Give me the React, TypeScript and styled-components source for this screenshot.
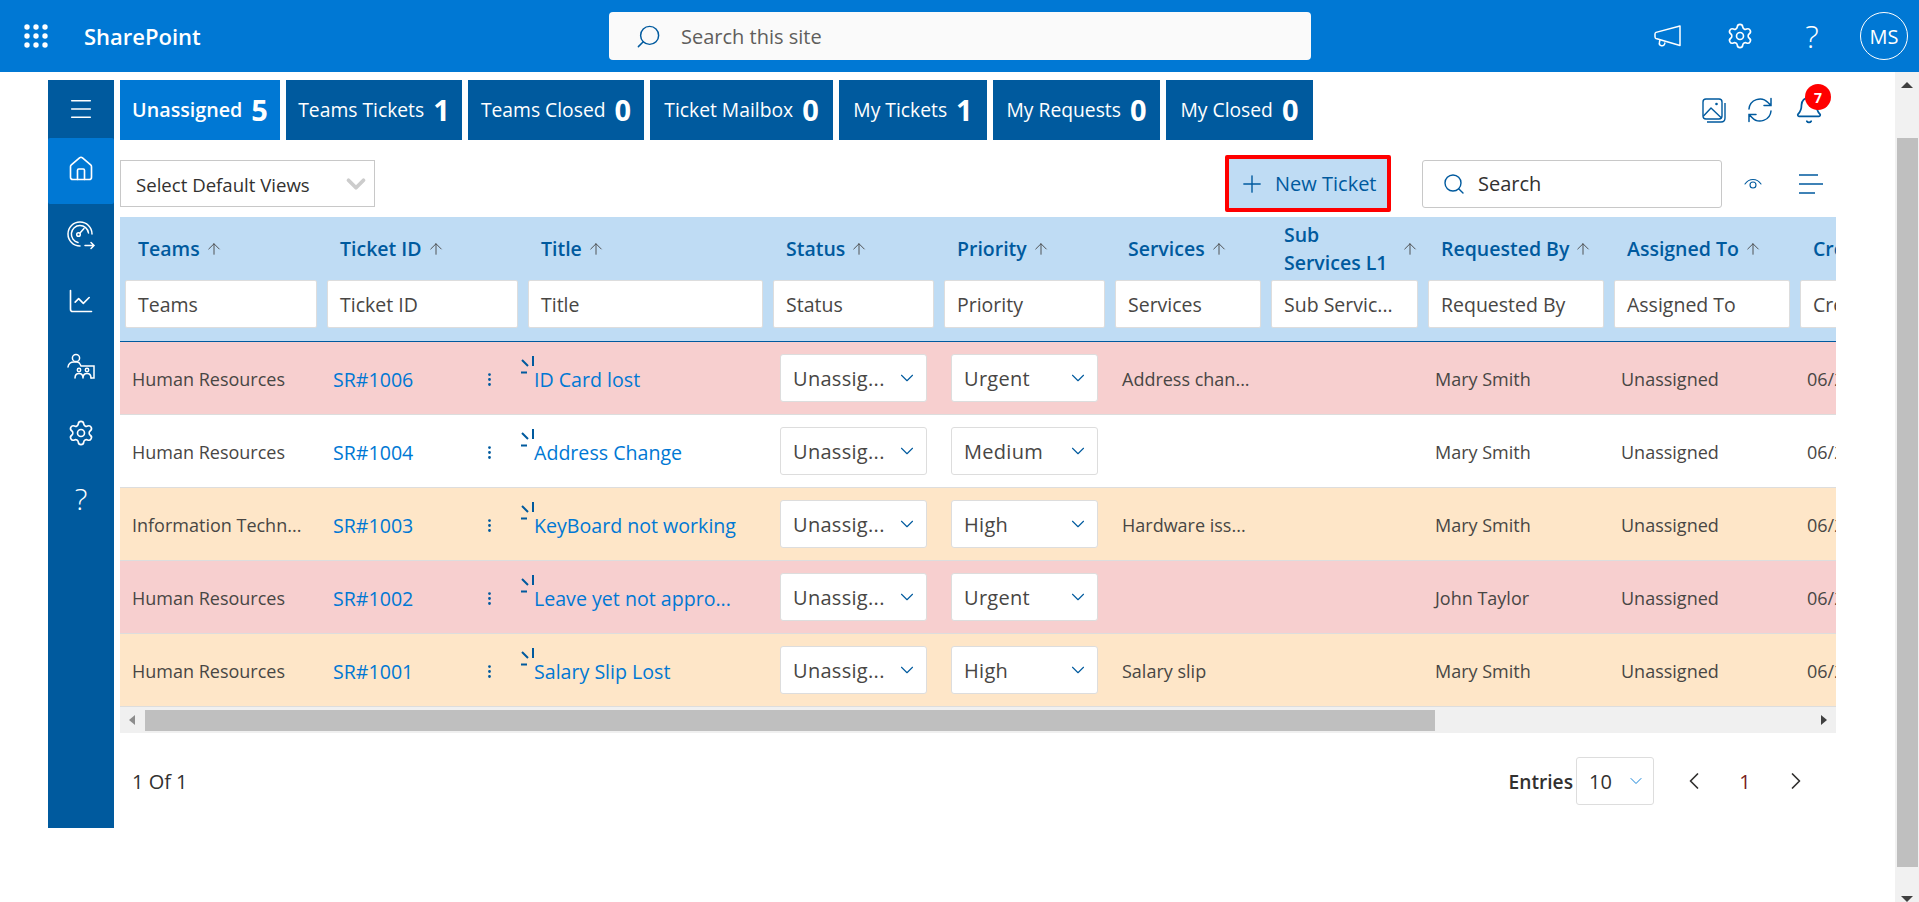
import React from 'react'
import styled, { createGlobalStyle } from 'styled-components'
import { ArrowUp, Bell, ChartLine, ChevronDown, ChevronLeft, ChevronRight, EllipsisVertical, House, Menu, Plus, Search, Settings } from 'lucide-react'

const COLUMNS = '202px 201px 245px 171px 171px 156px 157px 186px 186px 180px'
const FONT = '"Open Sans", "Noto Sans", sans-serif'

const tabs = [
  { label: 'Unassigned', count: 5, width: 160, active: true },
  { label: 'Teams Tickets', count: 1, width: 176 },
  { label: 'Teams Closed', count: 0, width: 176 },
  { label: 'Ticket Mailbox', count: 0, width: 183 },
  { label: 'My Tickets', count: 1, width: 148 },
  { label: 'My Requests', count: 0, width: 167 },
  { label: 'My Closed', count: 0, width: 147 },
]

const headers = ['Teams', 'Ticket ID', 'Title', 'Status', 'Priority', 'Services', 'Sub Services L1', 'Requested By', 'Assigned To', 'Created']
const filters = ['Teams', 'Ticket ID', 'Title', 'Status', 'Priority', 'Services', 'Sub Servic...', 'Requested By', 'Assigned To', 'Created']

const rows = [
  { team: 'Human Resources', id: 'SR#1006', title: 'ID Card lost', priority: 'Urgent', service: 'Address chan...', by: 'Mary Smith', tone: 'pink' },
  { team: 'Human Resources', id: 'SR#1004', title: 'Address Change', priority: 'Medium', service: '', by: 'Mary Smith', tone: 'white' },
  { team: 'Information Techn...', id: 'SR#1003', title: 'KeyBoard not working', priority: 'High', service: 'Hardware iss...', by: 'Mary Smith', tone: 'orange' },
  { team: 'Human Resources', id: 'SR#1002', title: 'Leave yet not appro...', priority: 'Urgent', service: '', by: 'John Taylor', tone: 'pink' },
  { team: 'Human Resources', id: 'SR#1001', title: 'Salary Slip Lost', priority: 'High', service: 'Salary slip', by: 'Mary Smith', tone: 'orange' },
]

const toneColors: Record<string, string> = { pink: '#f7cfcf', white: '#ffffff', orange: '#fee6c8' }

const GaugeIcon = () => (
  <svg width="30" height="30" viewBox="0 0 30 30" fill="none" stroke="currentColor" strokeWidth="1.5" strokeLinecap="round">
    <path d="M14 26A12 12 0 1 1 26 14" />
    <path d="M12 22.500A8.600 8.600 0 1 1 22.500 13" />
    <circle cx="12.500" cy="14.500" r="1.800" />
    <path d="M14 13l4-4.500M19 25.500h9M25 22.500l3 3-3 3" />
  </svg>
)

const PeopleIcon = () => (
  <svg width="30" height="30" viewBox="0 0 30 30" fill="none" stroke="currentColor" strokeWidth="1.5" strokeLinecap="round">
    <circle cx="10" cy="6" r="3.600" />
    <path d="M2 15c.4-3 2.600-5 6-5h3c1.600 0 2.500.8 3 2l1 2h13v12h-3" />
    <circle cx="13" cy="18" r="1.700" />
    <circle cx="21" cy="18" r="1.700" />
    <path d="M9 26c0-3 1.500-4.600 4-4.600s4 1.600 4 4.600M17 26c0-3 1.500-4.600 4-4.600s4 1.600 4 4.600" />
  </svg>
)

const MegaphoneIcon = () => (
  <svg width="28" height="26" viewBox="0 0 28 26" fill="none" stroke="currentColor" strokeWidth="1.5" strokeLinejoin="round">
    <path d="M26 3v19.500L2 15.500c-.8-.3-1-1-1-1.800V11c0-.8.3-1.300 1-1.600z" />
    <path d="M6 17l-.6 2.500c-.4 1.500.4 2.800 1.900 3.200 1.500.4 2.800-.3 3.300-1.800l.4-1.400" />
  </svg>
)

const PhotoStackIcon = () => (
  <svg width="24" height="25" viewBox="0 0 24 25" fill="none" stroke="currentColor" strokeWidth="1.4" strokeLinejoin="round">
    <rect x="1" y="1" width="19" height="20" rx="3" />
    <path d="M23 5v15c0 2.200-1.600 4-4 4H5" />
    <path d="M1.500 18l7.500-8 10.500 10" />
    <circle cx="14.500" cy="6" r="1.300" fill="currentColor" stroke="none" />
  </svg>
)

const RefreshIcon = () => (
  <svg width="26" height="26" viewBox="0 0 26 26" fill="none" stroke="currentColor" strokeWidth="1.5" strokeLinecap="round">
    <path d="M2 12A11 11 0 0 1 21 5.500l3 3M24 1.500v7h-7" />
    <path d="M24 14A11 11 0 0 1 5 20.500l-3-3M2 24.500v-7h7" />
  </svg>
)

const EyeIcon = () => (
  <svg width="18" height="14" viewBox="0 0 18 14" fill="none" stroke="currentColor" strokeWidth="1.1" strokeLinecap="round">
    <path d="M1 7c2-3 5-4.500 8-4.500S15 4 17 7" />
    <circle cx="9" cy="8" r="3" />
  </svg>
)

const LinesIcon = () => (
  <svg width="25" height="22" viewBox="0 0 25 22" fill="none" stroke="currentColor" strokeWidth="1.600">
    <path d="M1 2h19M1 11h24M1 20h16" />
  </svg>
)

const SpinnerIcon = () => (
  <svg width="14" height="18" viewBox="0 0 14 18" fill="none" stroke="#005a9e" strokeWidth="2">
    <path d="M12 0v10M1 4l6 6M0 16.500h6" />
  </svg>
)

const WaffleIcon = () => (
  <svg width="24" height="24" viewBox="0 0 24 24" fill="currentColor">
    {[3, 12, 21].flatMap((y) => [3, 12, 21].map((x) => <circle key={`${x}-${y}`} cx={x} cy={y} r="2.700" />))}
  </svg>
)

const App = () => (
  <Page>
    <GlobalStyle />
    <TopBar>
      <Waffle><WaffleIcon /></Waffle>
      <Brand>SharePoint</Brand>
      <SiteSearch>
        <Search size={27} strokeWidth={1.3} color="#005a9e" style={{ transform: 'scaleX(-1)' }} />
        <span>Search this site</span>
      </SiteSearch>
      <TopActions>
        <TopAction><MegaphoneIcon /></TopAction>
        <TopAction><Settings size={28} strokeWidth={1.4} /></TopAction>
        <TopAction><HelpMark>?</HelpMark></TopAction>
        <Avatar>MS</Avatar>
      </TopActions>
    </TopBar>
    <Body>
      <Main>
        <Sidebar>
          <SideToggle><Menu size={28} strokeWidth={1.3} /></SideToggle>
          <SideItem $active><House size={28} strokeWidth={1.4} /></SideItem>
          <SideItem><GaugeIcon /></SideItem>
          <SideItem><ChartLine size={28} strokeWidth={1.4} /></SideItem>
          <SideItem><PeopleIcon /></SideItem>
          <SideItem><Settings size={28} strokeWidth={1.4} /></SideItem>
          <SideItem><SideHelp>?</SideHelp></SideItem>
        </Sidebar>
        <Content>
          <TabRow>
            {tabs.map((t) => (
              <Tab key={t.label} $active={t.active} $width={t.width}>
                {t.label}
                <TabCount>{t.count}</TabCount>
              </Tab>
            ))}
            <TabTools>
              <PhotoStackIcon />
              <RefreshIcon />
              <BellWrap>
                <Bell size={30} strokeWidth={1.4} />
                <Badge>7</Badge>
              </BellWrap>
            </TabTools>
          </TabRow>
          <Toolbar>
            <ViewSelect>
              Select Default Views
              <ChevronDown size={30} strokeWidth={3} color="#cccccc" />
            </ViewSelect>
            <NewTicket>
              <Plus size={28} strokeWidth={1.2} />
              New Ticket
            </NewTicket>
            <SearchBox>
              <Search size={24} strokeWidth={1.4} color="#005a9e" />
              <span>Search</span>
            </SearchBox>
            <ToolIcon $margin={22}><EyeIcon /></ToolIcon>
            <ToolIcon $margin={36}><LinesIcon /></ToolIcon>
          </Toolbar>
          <Table>
            <HeadRow>
              {headers.map((h, i) => (
                <HeadCell key={h}>
                  <HeadLabel $wrap={i === 6}>{h}</HeadLabel>
                  <ArrowUp size={18} strokeWidth={1.200} color="#444" />
                </HeadCell>
              ))}
            </HeadRow>
            <FilterRow>
              {filters.map((f, i) => (
                <FilterCell key={i}><FilterInput>{f}</FilterInput></FilterCell>
              ))}
            </FilterRow>
            {rows.map((r) => (
              <Row key={r.id} $tone={r.tone}>
                <Cell>{r.team}</Cell>
                <IdCell>
                  <CellLink>{r.id}</CellLink>
                  <EllipsisVertical size={17} strokeWidth={2} color="#005a9e" />
                </IdCell>
                <TitleCell>
                  <Spinner><SpinnerIcon /></Spinner>
                  <CellLink>{r.title}</CellLink>
                </TitleCell>
                <Cell><RowSelect>Unassig...<ChevronDown size={22} strokeWidth={1.200} color="#005a9e" /></RowSelect></Cell>
                <Cell><RowSelect>{r.priority}<ChevronDown size={22} strokeWidth={1.200} color="#005a9e" /></RowSelect></Cell>
                <Cell>{r.service}</Cell>
                <Cell />
                <Cell>{r.by}</Cell>
                <Cell>Unassigned</Cell>
                <Cell>06/20/2024</Cell>
              </Row>
            ))}
          </Table>
          <HScroll>
            <ScrollArrow $dir="left" />
            <HThumb />
            <ScrollArrow $dir="right" />
          </HScroll>
          <Footer>
            <span>1 Of 1</span>
            <Pager>
              <EntriesLabel>Entries</EntriesLabel>
              <EntriesSelect>10<ChevronDown size={20} strokeWidth={1.100} color="#0078d4" /></EntriesSelect>
              <PageNav $margin={26}><ChevronLeft size={28} strokeWidth={1.500} /></PageNav>
              <PageNum>1</PageNum>
              <PageNav $margin={0}><ChevronRight size={28} strokeWidth={1.500} /></PageNav>
            </Pager>
          </Footer>
        </Content>
      </Main>
      <VScroll>
        <VArrow $dir="up" />
        <VThumb />
        <VArrow $dir="down" />
      </VScroll>
    </Body>
  </Page>
)

export default App

const GlobalStyle = createGlobalStyle`
  html, body {
    margin: 0;
    height: 100%;
    overflow: hidden;
    background: #fff;
  }
  * {
    box-sizing: border-box;
  }
`

const Page = styled.div`
  width: 1919px;
  height: 902px;
  display: flex;
  flex-direction: column;
  font-family: ${FONT};
  color: #323130;
`

const TopBar = styled.header`
  height: 72px;
  flex: none;
  display: flex;
  align-items: center;
  background: #0078d4;
  color: #fff;
`

const Waffle = styled.div`
  margin-left: 24px;
  width: 60px;
  display: flex;
`

const Brand = styled.div`
  width: 525px;
  font-size: 22px;
  font-weight: 600;
`

const SiteSearch = styled.div`
  width: 702px;
  height: 48px;
  display: flex;
  align-items: center;
  gap: 19px;
  padding-left: 26px;
  background: #fafafa;
  border-radius: 4px;
  color: #605e5c;
  font-size: 20px;
`

const TopActions = styled.div`
  margin-left: auto;
  padding-right: 11px;
  display: flex;
  align-items: center;
`

const TopAction = styled.div`
  width: 72px;
  display: flex;
  justify-content: center;
`

const HelpMark = styled.span`
  font-size: 32px;
  font-weight: 300;
  line-height: 1;
`

const Avatar = styled.div`
  width: 48px;
  height: 48px;
  margin-left: 12px;
  display: flex;
  align-items: center;
  justify-content: center;
  border: 1px solid #fff;
  border-radius: 50%;
  font-size: 20px;
  font-weight: 500;
`

const Body = styled.div`
  flex: 1;
  display: flex;
  min-height: 0;
`

const Main = styled.main`
  flex: 1;
  display: flex;
  align-items: flex-start;
  gap: 6px;
  padding: 8px 0 0 48px;
  min-width: 0;
`

const Sidebar = styled.nav`
  width: 66px;
  height: 748px;
  flex: none;
  background: #005a9e;
  color: #fff;
`

const SideToggle = styled.div`
  height: 58px;
  display: flex;
  align-items: center;
  justify-content: center;
`

const SideItem = styled.div<{ $active?: boolean }>`
  height: 66px;
  padding-bottom: 5px;
  display: flex;
  align-items: center;
  justify-content: center;
  border-radius: 2px;
  background: ${(p) => (p.$active ? '#0078d4' : 'transparent')};
`

const SideHelp = styled.span`
  font-size: 30px;
  font-weight: 300;
  line-height: 1;
`

const Content = styled.div`
  width: 1716px;
  flex: none;
`

const TabRow = styled.div`
  height: 60px;
  display: flex;
  gap: 6px;
`

const Tab = styled.div<{ $active?: boolean; $width: number }>`
  width: ${(p) => p.$width}px;
  padding-bottom: 1px;
  display: flex;
  align-items: center;
  justify-content: center;
  gap: 9px;
  background: ${(p) => (p.$active ? '#0078d4' : '#005a9e')};
  color: #fff;
  font-size: ${(p) => (p.$active ? 19.7 : 19.3)}px;
  font-weight: ${(p) => (p.$active ? 600 : 400)};
  white-space: nowrap;
`

const TabCount = styled.span`
  font-size: 29px;
  font-weight: 700;
  line-height: 1;
`

const TabTools = styled.div`
  margin-left: auto;
  padding-right: 12px;
  display: flex;
  align-items: center;
  gap: 21px;
  color: #005a9e;
`

const BellWrap = styled.div`
  position: relative;
  display: flex;
`

const Badge = styled.span`
  position: absolute;
  top: -11px;
  right: -7px;
  width: 26px;
  height: 26px;
  display: flex;
  align-items: center;
  justify-content: center;
  border-radius: 50%;
  background: #f00;
  color: #fff;
  font-size: 14px;
  font-weight: 700;
`

const Toolbar = styled.div`
  height: 77px;
  padding: 10px 13px 0 0;
  display: flex;
  align-items: center;
`

const ViewSelect = styled.div`
  width: 255px;
  height: 47px;
  padding: 1px 3px 0 15px;
  display: flex;
  align-items: center;
  justify-content: space-between;
  border: 1px solid #c8c8c8;
  font-size: 18.600px;
  white-space: nowrap;
`

const NewTicket = styled.div`
  margin-left: auto;
  width: 166px;
  height: 57px;
  display: flex;
  align-items: center;
  gap: 9px;
  padding-left: 9px;
  border: 4px solid #f00;
  border-radius: 2px;
  background: #bfdcf4;
  color: #005a9e;
  font-size: 20px;
  white-space: nowrap;
`

const SearchBox = styled.div`
  width: 300px;
  height: 48px;
  margin-left: 31px;
  padding-left: 19px;
  display: flex;
  align-items: center;
  gap: 12px;
  border: 1px solid #c8c8c8;
  border-radius: 3px;
  font-size: 20px;
`

const ToolIcon = styled.div<{ $margin: number }>`
  margin-left: ${(p) => p.$margin}px;
  display: flex;
  color: #005a9e;
`

const Table = styled.div`
  width: 100%;
  overflow: hidden;
`

const HeadRow = styled.div`
  height: 63px;
  display: grid;
  grid-template-columns: ${COLUMNS};
  background: #bfdcf4;
`

const HeadCell = styled.div`
  padding-left: 18px;
  display: flex;
  align-items: center;
  gap: 5px;
  color: #005a9e;
  font-size: 19.500px;
  font-weight: 600;
  white-space: nowrap;
`

const HeadLabel = styled.span<{ $wrap?: boolean }>`
  white-space: ${(p) => (p.$wrap ? 'normal' : 'nowrap')};
  line-height: 28px;
  width: ${(p) => (p.$wrap ? '112px' : 'auto')};
`

const FilterRow = styled.div`
  height: 62px;
  padding-bottom: 13px;
  display: grid;
  grid-template-columns: ${COLUMNS};
  background: #bfdcf4;
  border-bottom: 1px solid #005a9e;
`

const FilterCell = styled.div`
  padding: 0 5px;
`

const FilterInput = styled.div`
  height: 48px;
  padding: 1px 0 0 12px;
  display: flex;
  align-items: center;
  border: 1px solid #ddd;
  border-radius: 2px;
  background: #fff;
  color: #484644;
  font-size: 19.500px;
  white-space: nowrap;
  overflow: hidden;
`

const Row = styled.div<{ $tone: string }>`
  height: 73px;
  display: grid;
  grid-template-columns: ${COLUMNS};
  background: ${(p) => toneColors[p.$tone]};
  border-bottom: 1px solid #ddd;
`

const Cell = styled.div`
  padding: 2px 12px 0;
  display: flex;
  align-items: center;
  color: #484644;
  font-size: 18px;
  white-space: nowrap;
  overflow: hidden;
`

const IdCell = styled(Cell)`
  justify-content: space-between;
  padding-left: 11px;
  padding-right: 25px;
`

const TitleCell = styled(Cell)`
  position: relative;
  padding-left: 11px;
  overflow: visible;
`

const Spinner = styled.span`
  position: absolute;
  left: -2px;
  top: 14px;
  display: flex;
`

const CellLink = styled.span`
  color: #0078d4;
  font-size: 19.600px;
`

const RowSelect = styled.div`
  width: 100%;
  height: 48px;
  margin-top: -2px;
  padding: 0 8px 0 12px;
  display: flex;
  align-items: center;
  justify-content: space-between;
  border: 1px solid #ddd;
  border-radius: 3px;
  background: #fff;
  font-size: 20px;
  letter-spacing: 0.3px;
`

const HScroll = styled.div`
  height: 26px;
  padding-top: 3px;
  display: flex;
  align-items: flex-start;
  background: #f0f0f0;
  position: relative;
`

const HThumb = styled.div`
  margin-left: 25px;
  width: 1290px;
  height: 21px;
  background: #bfbfbf;
`

const ScrollArrow = styled.span<{ $dir: 'left' | 'right' }>`
  position: absolute;
  top: 8px;
  ${(p) => (p.$dir === 'left' ? 'left: 9px;' : 'right: 9px;')}
  width: 0;
  height: 0;
  border-top: 5px solid transparent;
  border-bottom: 5px solid transparent;
  ${(p) => (p.$dir === 'left' ? 'border-right: 6px solid #8c8c8c;' : 'border-left: 6px solid #404040;')}
`

const Footer = styled.div`
  height: 96px;
  padding: 0 26px 0 12px;
  display: flex;
  align-items: center;
  justify-content: space-between;
  font-size: 20px;
`

const Pager = styled.div`
  display: flex;
  align-items: center;
`

const EntriesLabel = styled.span`
  font-size: 19.200px;
  font-weight: 600;
`

const EntriesSelect = styled.div`
  width: 78px;
  height: 48px;
  margin-left: 3px;
  padding: 0 7px 0 12px;
  display: flex;
  align-items: center;
  justify-content: space-between;
  border: 1px solid #ddd;
  border-radius: 3px;
`

const PageNav = styled.span<{ $margin: number }>`
  margin-left: ${(p) => p.$margin}px;
  display: flex;
`

const PageNum = styled.span`
  width: 74px;
  text-align: center;
  color: #7a1f1f;
`

const VScroll = styled.aside`
  width: 24px;
  flex: none;
  position: relative;
  background: #f1f1f1;
`

const VThumb = styled.div`
  position: absolute;
  top: 66px;
  left: 2px;
  width: 21px;
  height: 729px;
  background: #bfbfbf;
`

const VArrow = styled.span<{ $dir: 'up' | 'down' }>`
  position: absolute;
  left: 6px;
  ${(p) => (p.$dir === 'up' ? 'top: 10px;' : 'bottom: 0;')}
  width: 0;
  height: 0;
  border-left: 6px solid transparent;
  border-right: 6px solid transparent;
  ${(p) => (p.$dir === 'up' ? 'border-bottom: 6px solid #404040;' : 'border-top: 6px solid #404040;')}
`
